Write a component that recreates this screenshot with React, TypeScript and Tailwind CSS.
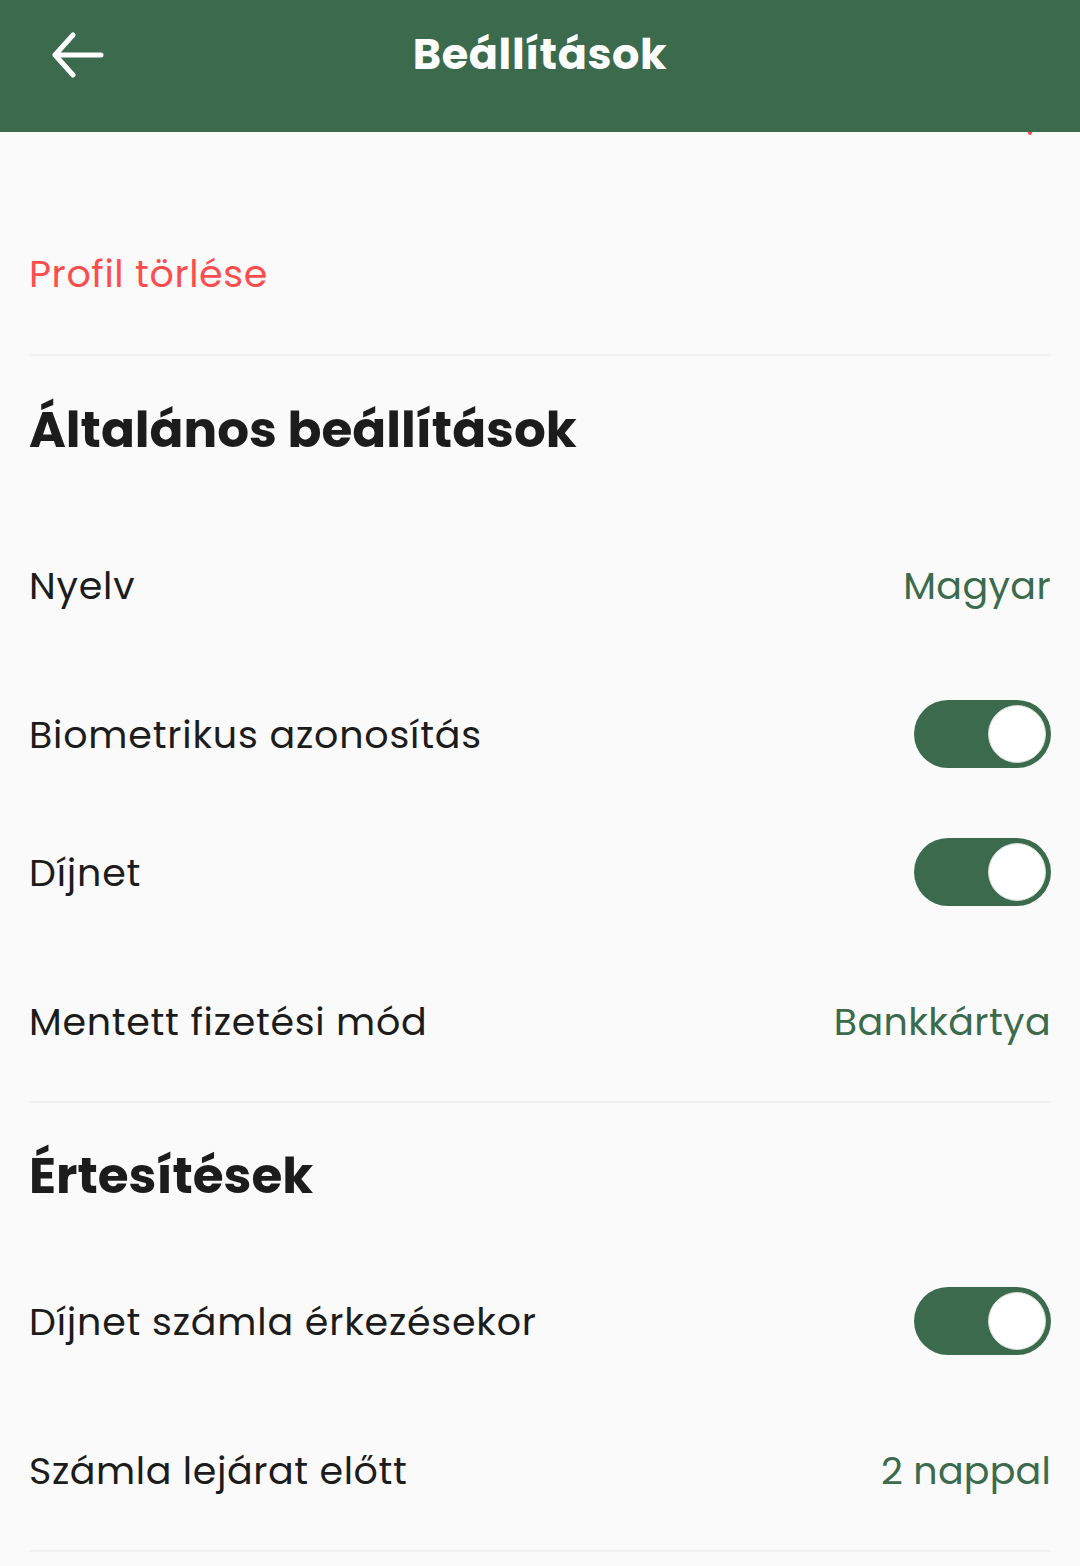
import { useState } from "react";

const font = { fontFamily: '"Poppins", "Open Sans", "Noto Sans", sans-serif' };

function Toggle({ on, onChange }: { on: boolean; onChange: () => void }) {
  return (
    <button
      type="button"
      onClick={onChange}
      className={`flex h-[68px] w-[137px] shrink-0 items-center rounded-full px-[5px] ${
        on ? "justify-end bg-[#3b6a4c]" : "justify-start bg-[#d4d4d4]"
      }`}
    >
      <span className="block h-[58px] w-[58px] rounded-full border border-[#cfd8d2] bg-white" />
    </button>
  );
}

function Divider() {
  return <div className="h-[2px] w-full bg-[#f1f1f1]" />;
}

export default function App() {
  const [toggles, setToggles] = useState({ bio: true, dijnet: true, invoice: true });
  const flip = (key: keyof typeof toggles) =>
    setToggles((prev) => ({ ...prev, [key]: !prev[key] }));

  return (
    <div className="min-h-[1566px] w-full bg-[#fafafa]" style={font}>
      <header className="relative flex h-[132px] items-start bg-[#3b6a4c] px-[52px] pt-[31px]">
        <svg width="52" height="48" viewBox="0 0 52 48" fill="none" className="shrink-0">
          <path
            d="M21 4 L3 24 L21 44 M3 24 H49"
            stroke="white"
            strokeWidth="5"
            strokeLinecap="round"
            strokeLinejoin="round"
          />
        </svg>
        <h1 className="absolute left-0 right-0 top-[26px] text-center text-[43px] font-bold leading-[56px] tracking-[0.6px] text-white">
          Beállítások
        </h1>
        <span className="absolute bottom-[-3px] right-[48px] h-[3px] w-[4px] rounded-b-full bg-[#ff4d4d]" />
      </header>

      <main className="px-[29px]">
        <div className="pt-[118px] pb-[56px]">
          <button type="button" className="text-[38px] leading-[48px] tracking-[0.6px] text-[#ff4d4d]">
            Profil törlése
          </button>
        </div>
        <Divider />

        <h2 className="mt-[44px] text-[50px] font-bold leading-[60px] text-[#1c1c1c]">
          Általános beállítások
        </h2>

        <div className="mt-[100px] flex h-[50px] items-center justify-between text-[38px]">
          <span className="tracking-[0.8px] text-[#1c1c1c]">Nyelv</span>
          <span className="tracking-[0.4px] text-[#3b6a4c]">Magyar</span>
        </div>

        <div className="mt-[90px] flex h-[68px] items-center justify-between text-[38px]">
          <span className="tracking-[0.8px] text-[#1c1c1c]">Biometrikus azonosítás</span>
          <Toggle on={toggles.bio} onChange={() => flip("bio")} />
        </div>

        <div className="mt-[70px] flex h-[68px] items-center justify-between text-[38px]">
          <span className="tracking-[0.8px] text-[#1c1c1c]">Díjnet</span>
          <Toggle on={toggles.dijnet} onChange={() => flip("dijnet")} />
        </div>

        <div className="mt-[90px] flex h-[50px] items-center justify-between text-[38px]">
          <span className="tracking-[0.7px] text-[#1c1c1c]">Mentett fizetési mód</span>
          <span className="tracking-[0.4px] text-[#3b6a4c]">Bankkártya</span>
        </div>

        <div className="mt-[55px]">
          <Divider />
        </div>

        <h2 className="mt-[43px] text-[50px] font-bold leading-[60px] text-[#1c1c1c]">
          Értesítések
        </h2>

        <div className="mt-[81px] flex h-[68px] items-center justify-between text-[38px]">
          <span className="tracking-[0.8px] text-[#1c1c1c]">Díjnet számla érkezésekor</span>
          <Toggle on={toggles.invoice} onChange={() => flip("invoice")} />
        </div>

        <div className="mt-[90px] flex h-[50px] items-center justify-between text-[38px]">
          <span className="tracking-[0.6px] text-[#1c1c1c]">Számla lejárat előtt</span>
          <span className="tracking-[0.2px] text-[#3b6a4c]">2 nappal</span>
        </div>

        <div className="mt-[55px]">
          <Divider />
        </div>
      </main>
    </div>
  );
}
